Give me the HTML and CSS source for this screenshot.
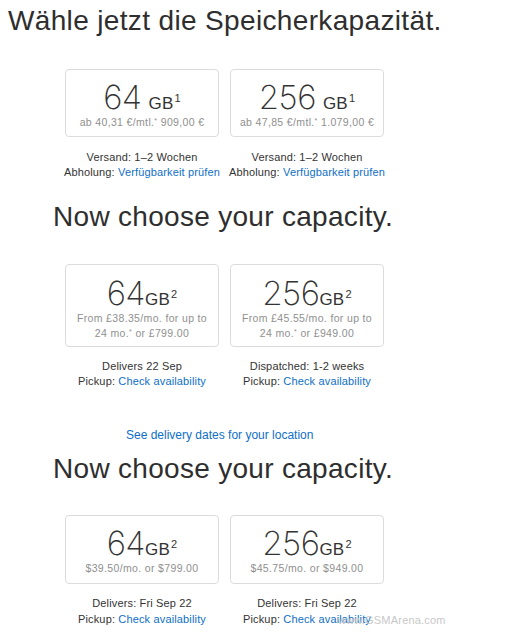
FILE: index.html
```html
<!DOCTYPE html>
<html lang="de">
<head>
<meta charset="utf-8">
<title>Speicherkapazität</title>
<link rel="stylesheet" href="styles.css">
</head>
<body>
<main class="page">
  <section class="sec sec-de">
    <h1 class="title">Wähle jetzt die Speicherkapazität.</h1>
    <div class="options">
      <div class="option">
        <div class="card">
          <div class="size"><span class="num">64</span><span class="unit spaced">GB<sup>1</sup></span></div>
          <div class="price">ab 40,31 €/mtl.<sup>*</sup> 909,00 €</div>
        </div>
        <div class="ship">
          <p>Versand: 1–2 Wochen</p>
          <p>Abholung: <a href="#">Verfügbarkeit prüfen</a></p>
        </div>
      </div>
      <div class="option">
        <div class="card">
          <div class="size"><span class="num">256</span><span class="unit spaced">GB<sup>1</sup></span></div>
          <div class="price">ab 47,85 €/mtl.<sup>*</sup> 1.079,00 €</div>
        </div>
        <div class="ship">
          <p>Versand: 1–2 Wochen</p>
          <p>Abholung: <a href="#">Verfügbarkeit prüfen</a></p>
        </div>
      </div>
    </div>
  </section>

  <section class="sec sec-uk">
    <h2 class="title">Now choose your capacity.</h2>
    <div class="options">
      <div class="option">
        <div class="card card-tall">
          <div class="size"><span class="num">64</span><span class="unit">GB<sup>2</sup></span></div>
          <div class="price">From £38.35/mo. for up to<br>24 mo.<sup>*</sup> or £799.00</div>
        </div>
        <div class="ship">
          <p>Delivers 22 Sep</p>
          <p>Pickup: <a href="#">Check availability</a></p>
        </div>
      </div>
      <div class="option">
        <div class="card card-tall">
          <div class="size"><span class="num">256</span><span class="unit">GB<sup>2</sup></span></div>
          <div class="price">From £45.55/mo. for up to<br>24 mo.<sup>*</sup> or £949.00</div>
        </div>
        <div class="ship">
          <p>Dispatched: 1-2 weeks</p>
          <p>Pickup: <a href="#">Check availability</a></p>
        </div>
      </div>
    </div>
    <p class="location"><a href="#">See delivery dates for your location</a></p>
  </section>

  <section class="sec sec-us">
    <h2 class="title">Now choose your capacity.</h2>
    <div class="options">
      <div class="option">
        <div class="card">
          <div class="size"><span class="num">64</span><span class="unit">GB<sup>2</sup></span></div>
          <div class="price">$39.50/mo. or $799.00</div>
        </div>
        <div class="ship">
          <p>Delivers: Fri Sep 22</p>
          <p>Pickup: <a href="#">Check availability</a></p>
        </div>
      </div>
      <div class="option">
        <div class="card">
          <div class="size"><span class="num">256</span><span class="unit">GB<sup>2</sup></span></div>
          <div class="price">$45.75/mo. or $949.00</div>
        </div>
        <div class="ship">
          <p>Delivers: Fri Sep 22</p>
          <p>Pickup: <a href="#">Check availability</a></p>
        </div>
      </div>
    </div>
    <span class="watermark">www.GSMArena.com</span>
  </section>
</main>
</body>
</html>
```

FILE: styles.css
```css
* { box-sizing: border-box; }

html, body {
  margin: 0;
  padding: 0;
  background: #ffffff;
}

body {
  font-family: "Liberation Sans", Arial, sans-serif;
  color: #333333;
  width: 514px;
  height: 636px;
  overflow: hidden;
}

.page {
  display: flex;
  flex-direction: column;
}

.sec {
  position: relative;
  display: flex;
  flex-direction: column;
}

.title {
  margin: 0;
  font-weight: 400;
  color: #2e2e2e;
}

.sec-de .title {
  font-size: 28px;
  line-height: 34px;
  letter-spacing: 0.35px;
  margin-top: 4px;
  padding-left: 8px;
}

.sec-uk .title,
.sec-us .title {
  font-size: 28px;
  line-height: 32px;
  letter-spacing: 0.3px;
  padding-left: 53px;
}

.sec-uk .title { margin-top: 21px; }
.sec-us .title { margin-top: 10px; }

.options {
  display: flex;
  gap: 11px;
  padding-left: 65px;
  margin-top: 31px;
}

.sec-us .options { margin-top: 30px; }

.option {
  width: 154px;
  display: flex;
  flex-direction: column;
  align-items: center;
}

.card {
  width: 154px;
  height: 68px;
  border: 1px solid #dcdcdc;
  border-radius: 4px;
  display: flex;
  flex-direction: column;
  align-items: center;
  padding-top: 12px;
}

.card-tall { height: 83px; padding-top: 13px; }
.sec-us .card { height: 69px; }

.size {
  display: flex;
  align-items: baseline;
  height: 30px;
  line-height: 30px;
  color: #333333;
}

.num {
  font-family: "Inter", "Lato", sans-serif;
  font-weight: 200;
  font-size: 33px;
  letter-spacing: -0.5px;
}

.unit {
  font-family: "Liberation Sans", Arial, sans-serif;
  font-size: 17px;
  line-height: 17px;
  letter-spacing: 0.2px;
}

.unit.spaced { margin-left: 7px; }

.unit sup {
  font-size: 11px;
  vertical-align: 7px;
  line-height: 0;
  margin-left: 1px;
}

.price {
  margin-top: 3px;
  font-size: 10.5px;
  line-height: 15px;
  color: #8f8f8f;
  text-align: center;
  letter-spacing: 0.35px;
}

.price sup {
  font-size: 7px;
  line-height: 0;
  vertical-align: 3px;
}

.ship {
  margin-top: 13px;
  text-align: center;
  font-size: 11px;
  line-height: 15px;
  letter-spacing: 0.15px;
  color: #333333;
  white-space: nowrap;
}

.sec-uk .ship { margin-top: 12px; }
.sec-us .ship { margin-top: 11px; line-height: 16px; }

.ship p { margin: 0; }

a {
  color: #0f6fc6;
  text-decoration: none;
}

.location {
  margin: 39px 0 0 126px;
  font-size: 12px;
  line-height: 15px;
}

.watermark {
  position: absolute;
  left: 338px;
  top: 171px;
  font-size: 11px;
  color: #c8c8c8;
  letter-spacing: 0.2px;
}
```
